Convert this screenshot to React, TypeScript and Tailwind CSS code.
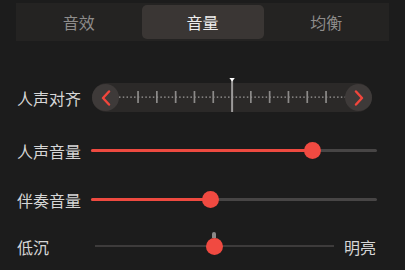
import React from "react";

const tabs = ["音效", "音量", "均衡"];

const Ruler: React.FC = () => {
  const dots: number[] = [];
  for (let x = 0; x <= 226; x += 3.76) dots.push(x);
  const majors = Array.from({ length: 11 }, (_, i) => 19 + i * 18.8);
  return (
    <div className="flex h-[29px] w-[280px] items-center rounded-full bg-[#2b2928]">
      <button className="flex h-[27px] w-[27px] shrink-0 items-center justify-center rounded-full bg-[#3e3a39]">
        <svg width="10" height="16" viewBox="0 0 10 16">
          <path d="M8 1.5 L2 8 L8 14.5" fill="none" stroke="#f2463c" strokeWidth="2.4" strokeLinecap="round" strokeLinejoin="round" />
        </svg>
      </button>
      <svg width="226" height="29" className="overflow-visible">
        {dots.map((x, i) => (
          <rect key={i} x={x} y="13.4" width="1.5" height="1.5" fill="#8c8a89" />
        ))}
        {majors.map((x, i) =>
          i === 5 ? null : <rect key={i} x={x - 0.8} y="8" width="1.7" height="12" fill="#8c8a89" />
        )}
        <rect x="112.1" y="-4" width="2" height="33" fill="#9c9a99" />
        <path d="M110.4 -5 L115.8 -5 L113.1 -1.5 Z" fill="#ffffff" />
      </svg>
      <button className="flex h-[27px] w-[27px] shrink-0 items-center justify-center rounded-full bg-[#3e3a39]">
        <svg width="10" height="16" viewBox="0 0 10 16">
          <path d="M2 1.5 L8 8 L2 14.5" fill="none" stroke="#f2463c" strokeWidth="2.4" strokeLinecap="round" strokeLinejoin="round" />
        </svg>
      </button>
    </div>
  );
};

const Slider: React.FC<{ value: number }> = ({ value }) => (
  <div className="relative h-[17px] w-[286px]">
    <div className="absolute left-0 right-0 top-[7px] h-[3px] rounded-full bg-[#474545]" />
    <div className="absolute left-0 top-[7px] h-[3px] rounded-full bg-[#ee4a40]" style={{ width: value }} />
    <div className="absolute top-0 h-[17px] w-[17px] rounded-full bg-[#f04a41]" style={{ left: value - 8 }} />
  </div>
);

export default function App() {
  return (
    <div
      className="flex h-[270px] w-[405px] flex-col bg-[#1c1c1c]"
      style={{ fontFamily: '"Noto Sans CJK SC", "Noto Sans", sans-serif' }}
    >
      <div className="mx-[16px] mt-[3px] flex h-[38px] items-center bg-[#242322] px-[2px]">
        {tabs.map((t, i) => (
          <div
            key={t}
            className={
              i === 1
                ? "mx-[2px] flex h-[34px] w-[122px] items-center justify-center rounded-[5px] bg-[#3a3634] text-[16px] text-[#ededed]"
                : "flex h-[34px] flex-1 items-center justify-center text-[16px] text-[#8e8c8b]"
            }
          >
            {t}
          </div>
        ))}
      </div>

      <div className="mt-[42px] flex h-[29px] items-center pl-[17px]">
        <span className="w-[75px] text-[16px] text-[#d6d6d6]">人声对齐</span>
        <Ruler />
      </div>

      <div className="mt-[30px] flex h-[17px] items-center pl-[17px]">
        <span className="w-[74px] text-[16px] text-[#d6d6d6]">人声音量</span>
        <Slider value={221} />
      </div>

      <div className="mt-[32px] flex h-[17px] items-center pl-[17px]">
        <span className="w-[74px] text-[16px] text-[#d6d6d6]">伴奏音量</span>
        <Slider value={119} />
      </div>

      <div className="mt-[30px] flex h-[17px] items-center pl-[17px]">
        <span className="w-[78px] text-[16px] text-[#d6d6d6]">低沉</span>
        <div className="relative h-[17px] w-[239px]">
          <div className="absolute left-0 right-0 top-[7px] h-[2px] bg-[#3d3b3b]" />
          <div className="absolute left-[117px] top-[-6px] h-[6px] w-[4px] rounded-t-[2px] bg-[#8a8887]" />
          <div className="absolute left-[111px] top-0 h-[17px] w-[17px] rounded-full bg-[#f04a41]" />
        </div>
        <span className="ml-[10px] text-[16px] text-[#d6d6d6]">明亮</span>
      </div>
    </div>
  );
}
